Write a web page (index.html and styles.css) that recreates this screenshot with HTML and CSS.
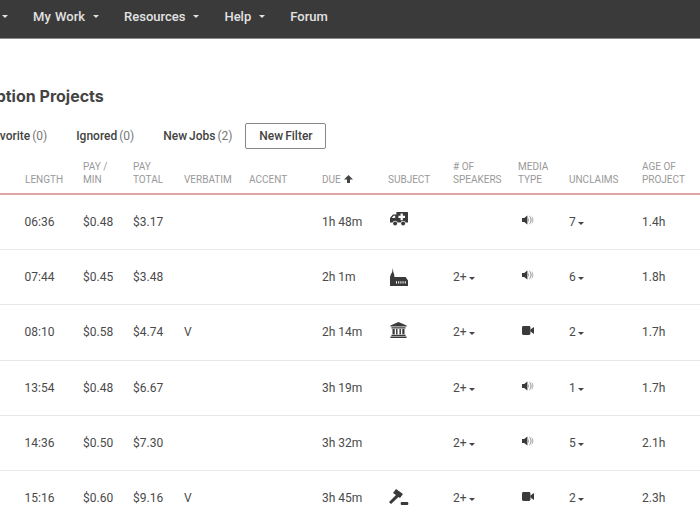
FILE: index.html
```html
<!DOCTYPE html>
<html lang="en">
<head>
<meta charset="utf-8">
<title>Transcription Projects</title>
<link rel="stylesheet" href="styles.css">
</head>
<body>
<svg class="defs" width="0" height="0" aria-hidden="true">
  <defs>
    <symbol id="i-amb" viewBox="0 0 18 14"><path fill-rule="evenodd" d="M6.4 0 H17.4 Q18 0 18 .6 V10.6 H15.6 A2.6 2.6 0 0 0 10.6 10.6 H7.6 A2.6 2.6 0 0 0 2.6 10.6 H0 V6 L3 2.4 H6.4 Z M3.6 3.8 L1.8 6 H5.2 V3.8 Z M10.6 1.6 V3.8 H8.4 V6 H10.6 V8.2 H12.8 V6 H15 V3.8 H12.8 V1.6 Z"/><circle cx="5.1" cy="11.4" r="2"/><circle cx="13.1" cy="11.4" r="2"/></symbol>
    <symbol id="i-church" viewBox="0 0 18 18"><path fill-rule="evenodd" d="M2.8 0 L3.3 4 L4.2 6.5 L4.4 9 H15.6 L18 12.4 V18 H0 V9 L.8 6.5 L2.2 4 Z M6 13.2 V15.6 H7 V13.2 Z M8.2 13.2 V15.6 H9.2 V13.2 Z M10.4 13.2 V15.6 H11.4 V13.2 Z M12.6 13.2 V15.6 H13.6 V13.2 Z M14.8 13.2 V15.6 H15.8 V13.2 Z"/></symbol>
    <symbol id="i-bank" viewBox="0 0 18 17"><path fill-rule="evenodd" d="M9 0 L17.6 3.6 V4.8 H.4 V3.6 Z M1.5 5.6 H16.5 V6.8 H1.5 Z M2.6 7.4 H5 V13 H2.6 Z M6.4 7.4 H8 V13 H6.4 Z M10 7.4 H11.6 V13 H10 Z M13 7.4 H15.4 V13 H13 Z M1.5 13.6 H16.5 V15 H1.5 Z M.4 15.4 H17.6 V17 H.4 Z"/></symbol>
    <symbol id="i-gavel" viewBox="0 0 20 16"><path d="M7 0 L14 5 L11 9 L9.5 8 L2 15 L0 13 L7 6 L4 4 Z"/><rect x="11.7" y="13" width="7.6" height="3" rx="1"/></symbol>
    <symbol id="i-vol" viewBox="0 0 12 10"><path d="M0 3 H2.2 L5.4 .4 V9.6 L2.2 7 H0 Z"/><path opacity=".6" d="M6.2 2.4 Q8 5 6.2 7.6 Z"/><path opacity=".5" d="M7.6 .4 Q11.8 5 7.6 9.6 L7.2 9 Q9.8 5 7.2 1 Z"/><path opacity=".4" d="M9.4 .4 Q13.4 5 9.4 9.6 Q11.2 5 9.4 .4 Z"/></symbol>
    <symbol id="i-vid" viewBox="0 0 12 9"><rect x="0" y="0" width="8.4" height="9" rx="1.4"/><path d="M8.4 3.6 L12 1 V8 L8.4 5.4 Z"/></symbol>
  </defs>
</svg>
<div class="page">
  <header class="nav">
    <span class="nav-item">Jobs <i class="caret"></i></span>
    <span class="nav-item">My Work <i class="caret"></i></span>
    <span class="nav-item">Resources <i class="caret"></i></span>
    <span class="nav-item">Help <i class="caret"></i></span>
    <span class="nav-item">Forum</span>
  </header>
  <main class="main">
    <h1 class="title">Transcription Projects</h1>
    <div class="filters">
      <span class="filter">Favorite <em>(0)</em></span>
      <span class="filter">Ignored <em>(0)</em></span>
      <span class="filter">New Jobs <em>(2)</em></span>
      <button class="new-filter">New Filter</button>
    </div>
    <table class="jobs">
      <colgroup>
        <col class="c-len"><col class="c-min"><col class="c-tot"><col class="c-verb"><col class="c-acc"><col class="c-due"><col class="c-sub"><col class="c-spk"><col class="c-med"><col class="c-unc"><col class="c-age">
      </colgroup>
      <thead>
        <tr><th>Length</th><th>Pay /<br>Min</th><th>Pay<br>Total</th><th>Verbatim</th><th>Accent</th><th>Due <svg class="up" viewBox="0 0 9 8"><path d="M4.5 0 L9 4.4 H6 V8 H3 V4.4 H0 Z"/></svg></th><th>Subject</th><th># of<br>Speakers</th><th>Media<br>Type</th><th>Unclaims</th><th>Age of<br>Project</th></tr>
      </thead>
      <tbody>
        <tr><td>06:36</td><td>$0.48</td><td>$3.17</td><td></td><td></td><td>1h 48m</td><td><svg class="ic amb"><use href="#i-amb"/></svg></td><td></td><td><svg class="ic vol"><use href="#i-vol"/></svg></td><td>7<i class="dd"></i></td><td>1.4h</td></tr>
        <tr><td>07:44</td><td>$0.45</td><td>$3.48</td><td></td><td></td><td>2h 1m</td><td><svg class="ic church"><use href="#i-church"/></svg></td><td>2+<i class="dd"></i></td><td><svg class="ic vol"><use href="#i-vol"/></svg></td><td>6<i class="dd"></i></td><td>1.8h</td></tr>
        <tr><td>08:10</td><td>$0.58</td><td>$4.74</td><td>V</td><td></td><td>2h 14m</td><td><svg class="ic bank"><use href="#i-bank"/></svg></td><td>2+<i class="dd"></i></td><td><svg class="ic vid"><use href="#i-vid"/></svg></td><td>2<i class="dd"></i></td><td>1.7h</td></tr>
        <tr><td>13:54</td><td>$0.48</td><td>$6.67</td><td></td><td></td><td>3h 19m</td><td></td><td>2+<i class="dd"></i></td><td><svg class="ic vol"><use href="#i-vol"/></svg></td><td>1<i class="dd"></i></td><td>1.7h</td></tr>
        <tr><td>14:36</td><td>$0.50</td><td>$7.30</td><td></td><td></td><td>3h 32m</td><td></td><td>2+<i class="dd"></i></td><td><svg class="ic vol"><use href="#i-vol"/></svg></td><td>5<i class="dd"></i></td><td>2.1h</td></tr>
        <tr><td>15:16</td><td>$0.60</td><td>$9.16</td><td>V</td><td></td><td>3h 45m</td><td><svg class="ic gavel"><use href="#i-gavel"/></svg></td><td>2+<i class="dd"></i></td><td><svg class="ic vid"><use href="#i-vid"/></svg></td><td>2<i class="dd"></i></td><td>2.3h</td></tr>
      </tbody>
    </table>
  </main>
</div>
</body>
</html>
```
FILE: styles.css
```css
html, body { margin: 0; padding: 0; background: #fff; overflow: hidden; height: 520px; }
body { font-family: Roboto, "Liberation Sans", sans-serif; color: #444; font-size: 12px; }
.defs { position: absolute; }
.page { width: 700px; }

.nav { display: flex; height: 33px; padding: 0 0 5px 0; background: #3a3a3a; border-bottom: 1px solid #8a8a8a; align-items: center; gap: 25px; color: #e2e2e2; font-size: 13px; font-weight: 500; word-spacing: 1px; }
.nav-item { white-space: nowrap; display: inline-flex; align-items: center; }
.nav-item:first-child { margin-left: -34.5px; }
.caret { display: inline-block; margin-left: 8px; margin-top: -1px; border-left: 3.5px solid transparent; border-right: 3.5px solid transparent; border-top: 3.5px solid #e2e2e2; }

.main { padding-top: 48px; }
.title { margin: 0 0 0 -69px; font: 700 16px/18px Inter, "Open Sans", sans-serif; color: #444; white-space: nowrap; }
.filters { display: flex; align-items: center; margin: 18px 0 0 -13px; height: 26px; white-space: nowrap; word-spacing: -1px; }
.filter { font-weight: 500; color: #444; margin-right: 29px; }
.filter em { font-style: normal; font-weight: 400; color: #777; }
.new-filter { height: 26px; width: 81px; margin-left: -16px; padding: 0; border: 1px solid #888; border-radius: 2px; background: #fff; font: 500 12px Roboto, sans-serif; color: #444; word-spacing: -1px; }

.jobs { border-collapse: collapse; table-layout: fixed; width: 700px; margin-top: -1px; }
.c-len { width: 83px; } .c-min { width: 50px; } .c-tot { width: 51px; } .c-verb { width: 65px; } .c-acc { width: 73px; } .c-due { width: 66px; } .c-sub { width: 65px; } .c-spk { width: 65px; } .c-med { width: 51px; } .c-unc { width: 73px; } .c-age { width: 58px; }
.jobs th, .jobs td { padding: 0; text-align: left; font-weight: 400; }
.jobs th:first-child { padding-left: 25px; }
.jobs td:first-child { padding-left: 24.5px; }
.jobs th { height: 38px; vertical-align: bottom; padding-bottom: 7px; font-size: 10px; line-height: 13px; color: #999; text-transform: uppercase; border-bottom: 2px solid #e0a4a4; }
.jobs td { height: 54.2px; border-bottom: 1px solid #e8e8e8; color: #4a4a4a; }
.up { display: inline-block; width: 9px; height: 8px; margin-left: 1px; fill: #444; vertical-align: 0; }
.dd { display: inline-block; width: 0; height: 0; margin-left: 2px; vertical-align: 1px; border-left: 3.5px solid transparent; border-right: 3.5px solid transparent; border-top: 3.5px solid #444; }
.ic { display: block; fill: #3a3a3a; }
.amb { width: 18px; height: 14px; margin: -6px 0 0 2px; }
.church { width: 18px; height: 18px; margin: -1px 0 0 2px; }
.bank { width: 17px; height: 16px; margin: -4px 0 0 2px; }
.gavel { width: 20px; height: 16px; margin: -2px 0 0 1px; }
.vol { width: 12px; height: 10px; margin: -4px 0 0 4px; }
.vid { width: 12px; height: 9px; margin: -3px 0 0 4px; }
```
